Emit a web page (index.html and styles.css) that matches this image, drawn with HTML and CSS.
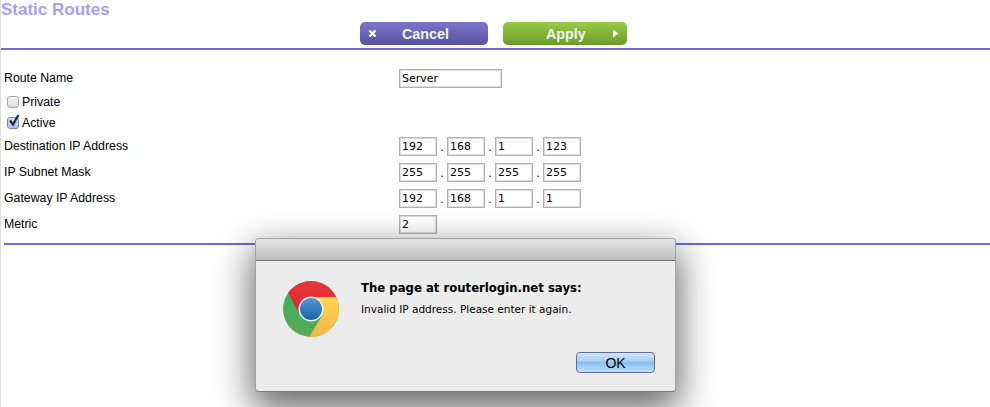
FILE: index.html
```html
<!DOCTYPE html>
<html lang="en">
<head>
<meta charset="utf-8">
<title>Static Routes</title>
<link rel="stylesheet" href="styles.css">
</head>
<body>
<main class="page">
  <h1 class="title">Static Routes</h1>
  <div class="actions">
    <button class="btn btn-cancel" type="button">
      <svg class="btn-icon" width="9" height="9" viewBox="0 0 9 9"><path d="M1.5 1.5l6 6M7.5 1.5l-6 6" stroke="#fff" stroke-width="2.2" fill="none"/></svg>
      <span class="btn-label">Cancel</span>
    </button>
    <button class="btn btn-apply" type="button">
      <span class="btn-label">Apply</span>
      <svg class="btn-icon" width="7" height="9" viewBox="0 0 7 9"><path d="M1 .5l5.5 4-5.5 4z" fill="#fff"/></svg>
    </button>
  </div>
  <hr class="rule rule-top">
  <form class="form">
    <div class="row row-name">
      <label class="label">Route Name</label>
      <input class="field field-name" value="Server">
    </div>
    <label class="check check-private"><input type="checkbox">Private</label>
    <label class="check check-active"><input type="checkbox" checked>
      <svg class="tick" width="14" height="14" viewBox="0 0 14 14"><path d="M3 7.500l3 4L11.500 2" stroke="#1d2b44" stroke-width="2.300" fill="none"/></svg>Active</label>
    <div class="row row-ip row-first">
      <label class="label">Destination IP Address</label>
      <div class="ip">
        <input class="field" value="192"><span class="dot">.</span><input class="field" value="168"><span class="dot">.</span><input class="field" value="1"><span class="dot">.</span><input class="field" value="123">
      </div>
    </div>
    <div class="row row-ip">
      <label class="label">IP Subnet Mask</label>
      <div class="ip">
        <input class="field" value="255"><span class="dot">.</span><input class="field" value="255"><span class="dot">.</span><input class="field" value="255"><span class="dot">.</span><input class="field" value="255">
      </div>
    </div>
    <div class="row row-ip">
      <label class="label">Gateway IP Address</label>
      <div class="ip">
        <input class="field" value="192"><span class="dot">.</span><input class="field" value="168"><span class="dot">.</span><input class="field" value="1"><span class="dot">.</span><input class="field" value="1">
      </div>
    </div>
    <div class="row row-ip">
      <label class="label">Metric</label>
      <div class="ip"><input class="field" value="2"></div>
    </div>
  </form>
  <hr class="rule rule-bottom">
</main>

<div class="dialog" role="alertdialog">
  <div class="dialog-bar"></div>
  <div class="dialog-body">
    <svg class="chrome" width="58" height="58" viewBox="0 0 58 58">
      <defs>
        <linearGradient id="r" x1="0" y1="0" x2="0" y2="1"><stop offset="0" stop-color="#e23a3a"/><stop offset="1" stop-color="#e8202e"/></linearGradient>
        <linearGradient id="g" x1="0" y1="0" x2="0" y2="1"><stop offset="0" stop-color="#35b45a"/><stop offset="1" stop-color="#5aa856"/></linearGradient>
        <linearGradient id="y" x1="0" y1="0" x2="0" y2="1"><stop offset="0" stop-color="#ffd54f"/><stop offset="1" stop-color="#f0b843"/></linearGradient>
        <linearGradient id="b" x1="0" y1="0" x2="0" y2="1"><stop offset="0" stop-color="#5598d2"/><stop offset="1" stop-color="#1a63aa"/></linearGradient>
      </defs>
      <circle cx="29" cy="29" r="28" fill="url(#g)"/>
      <path d="M6 13A28 28 0 0 1 54.200 17L29 17L29 29L17 33z" fill="url(#r)"/>
      <path d="M54.200 17A28 28 0 0 1 27 57L40 36L29 29L29 17z" fill="url(#y)"/>
      <circle cx="29" cy="29" r="12.500" fill="#eef2f6"/>
      <circle cx="29" cy="29" r="11" fill="url(#b)"/>
    </svg>
    <div class="dialog-text">
      <p class="dialog-head">The page at routerlogin.net says:</p>
      <p class="dialog-msg">Invalid IP address. Please enter it again.</p>
    </div>
    <button class="ok" type="button">OK</button>
  </div>
</div>
</body>
</html>
```

FILE: styles.css
```css
* { box-sizing: border-box; }
html, body { margin: 0; padding: 0; height: 407px; overflow: hidden; background: #fff; }
body { font-family: "Liberation Sans", Arial, sans-serif; font-size: 12.3px; color: #000; position: relative; }

.page { border-left: 1px solid #ddd; height: 407px; }
.title { margin: 0; height: 22px; font-size: 17px; line-height: 19px; font-weight: 700; color: #a79efc; }

.actions { display: flex; justify-content: flex-start; gap: 15px; padding-left: 359px; height: 26px; }
.btn { width: 128px; height: 23px; margin: 0; padding: 0 8px; border: 0; border-radius: 5px; display: flex; align-items: center; color: #f2f2f6; font: 700 14.3px "Liberation Sans", Arial, sans-serif; }
.btn-cancel { background: linear-gradient(#7c75c8, #5a52a0); }
.btn-cancel .btn-label { margin-left: 25px; }
.btn-apply { width: 124px; background: linear-gradient(#98cc46, #6c9a2a); justify-content: space-between; padding: 0 8px 0 43px; }

.rule { margin: 0; border: 0; height: 2px; background: #7068dc; }
.rule-bottom { margin: 9px 0 0 3px; }

.form { display: flex; flex-direction: column; padding: 19px 0 0 3px; }
.row { display: flex; height: 19px; }
.label { width: 395px; line-height: 19px; }
.row-ip { margin-bottom: 7px; }
.row-ip:last-child { margin-bottom: 0; }
.row-first { margin-top: 6px; }
.ip { display: flex; }
.dot { width: 10px; text-align: center; font: 11px/21px "DejaVu Sans", sans-serif; }
.field { width: 38px; height: 19px; padding: 0 2px; border: 1px solid #b2b2b2; box-shadow: inset 0 0 0 1px #dedede; background: transparent; border-radius: 0; font: 11px "DejaVu Sans", sans-serif; color: #000; outline: 0; }
.field-name { width: 103px; }

.check { position: relative; display: flex; align-items: center; height: 16px; margin-left: 3px; line-height: 16px; }
.check input { appearance: none; margin: 0 3px 0 0; width: 12px; height: 12px; border: 1px solid #a4a4a4; border-radius: 3px; background: linear-gradient(#f6f6f6, #dcdcdc); }
.check input:checked { border-color: #7d8aa6; background: linear-gradient(#d4e0f4, #a9c0e4); }
.tick { position: absolute; left: 0; top: -2px; }
.check-private { margin-top: 6px; }
.check-active { margin-top: 5px; }

.dialog { position: absolute; left: 255px; top: 238px; width: 421px; height: 154px; border-radius: 4px; background: #ececec; border: 1px solid #a2a2a2; border-bottom-color: #777; box-shadow: 0 14px 36px 3px rgba(0,0,0,.6); overflow: hidden; }
.dialog-bar { height: 22px; background: linear-gradient(#e4e4e4, #bebebe); border-bottom: 1px solid #6f6f6f; }
.dialog-body { position: relative; height: 130px; display: flex; }
.chrome { flex: none; margin: 19px 0 0 26px; }
.dialog-text { margin: 19px 0 0 21px; }
.dialog-head { margin: 0; font: 700 11.7px/16px "DejaVu Sans", sans-serif; }
.dialog-msg { margin: 6px 0 0; font: 10.5px/14px "DejaVu Sans", sans-serif; }
.ok { position: absolute; left: 320px; top: 91px; width: 79px; height: 21px; padding: 0; border: 1px solid #5f6b94; border-radius: 4px; background: linear-gradient(#d3e6fa 0%, #a5cdf1 45%, #86bfee 50%, #bfe2fa 100%); font: 14px "Liberation Sans", Arial, sans-serif; color: #000; }
```
